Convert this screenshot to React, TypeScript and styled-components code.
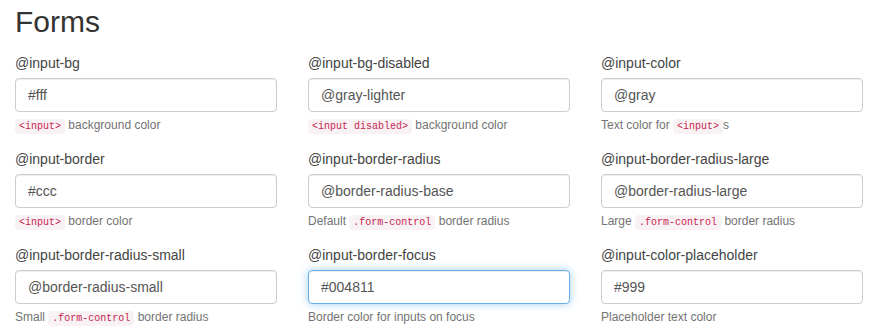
import styled, { createGlobalStyle } from 'styled-components';

const GlobalStyle = createGlobalStyle`
  body {
    margin: 0;
    background: #fff;
    font-family: "Liberation Sans", Arial, sans-serif;
    font-size: 14px;
    color: #333;
  }
`;

interface Field {
  name: string;
  value: string;
  help: React.ReactNode;
  focus?: boolean;
}

const Page = styled.div`
  padding: 5px 13px 0 15px;
`;

const Title = styled.h1`
  margin: 0 0 15px;
  font-size: 30px;
  font-weight: 400;
  line-height: 33px;
  color: #333;
`;

const Grid = styled.div`
  display: grid;
  grid-template-columns: repeat(3, 262px);
  column-gap: 31px;
  row-gap: 14px;
`;

const Group = styled.div`
  display: flex;
  flex-direction: column;
`;

const Label = styled.label`
  line-height: 20px;
  margin-bottom: 5px;
  color: #444;
`;

const Input = styled.input<{ $focus?: boolean }>`
  box-sizing: border-box;
  width: 100%;
  height: 34px;
  padding: 6px 12px;
  font-family: inherit;
  font-size: 14px;
  color: #555;
  background: #fff;
  border: 1px solid ${({ $focus }) => ($focus ? '#66afe9' : '#ccc')};
  border-radius: 4px;
  outline: none;
  box-shadow: ${({ $focus }) =>
    $focus
      ? 'inset 0 1px 1px rgba(0,0,0,.075), 0 0 8px rgba(102,175,233,.6)'
      : 'inset 0 1px 1px rgba(0,0,0,.075)'};
`;

const Help = styled.p`
  margin: 5px 0 0;
  font-size: 12px;
  line-height: 17px;
  color: #737373;
`;

const Code = styled.code`
  font-family: "Liberation Mono", "DejaVu Sans Mono", monospace;
  font-size: 10px;
  padding: 2px 4px;
  color: #c7254e;
  background: #f9f2f4;
  border-radius: 4px;
`;

const fields: Field[] = [
  { name: '@input-bg', value: '#fff', help: <><Code>&lt;input&gt;</Code> background color</> },
  { name: '@input-bg-disabled', value: '@gray-lighter', help: <><Code>&lt;input disabled&gt;</Code> background color</> },
  { name: '@input-color', value: '@gray', help: <>Text color for <Code>&lt;input&gt;</Code>s</> },
  { name: '@input-border', value: '#ccc', help: <><Code>&lt;input&gt;</Code> border color</> },
  { name: '@input-border-radius', value: '@border-radius-base', help: <>Default <Code>.form-control</Code> border radius</> },
  { name: '@input-border-radius-large', value: '@border-radius-large', help: <>Large <Code>.form-control</Code> border radius</> },
  { name: '@input-border-radius-small', value: '@border-radius-small', help: <>Small <Code>.form-control</Code> border radius</> },
  { name: '@input-border-focus', value: '#004811', help: 'Border color for inputs on focus', focus: true },
  { name: '@input-color-placeholder', value: '#999', help: 'Placeholder text color' },
];

export default function App() {
  return (
    <Page>
      <GlobalStyle />
      <Title>Forms</Title>
      <Grid>
        {fields.map((f) => (
          <Group key={f.name}>
            <Label>{f.name}</Label>
            <Input $focus={f.focus} defaultValue={f.value} readOnly />
            <Help>{f.help}</Help>
          </Group>
        ))}
      </Grid>
    </Page>
  );
}
